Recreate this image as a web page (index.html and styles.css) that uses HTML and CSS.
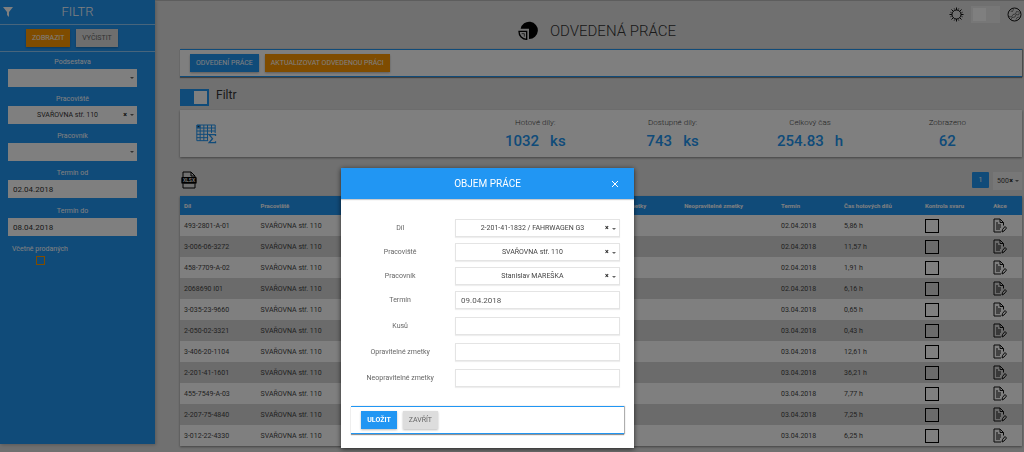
FILE: index.html
```html
<!DOCTYPE html>
<html lang="cs">
<head>
<meta charset="utf-8">
<title>Odvedená práce</title>
<link rel="stylesheet" href="styles.css">
</head>
<body>
<svg class="defs" aria-hidden="true">
  <symbol id="edit" viewBox="0 0 28 30">
    <g fill="none" stroke="#111" stroke-width="2">
      <path d="M21 15V9l-7-7H2v26h14M14 2v7h7"/>
      <path d="M6 10h4M6 14h10M6 18h10M6 22h8"/>
      <path d="M18 28l1-5 5-6 3 3-5 6z"/>
    </g>
  </symbol>
</svg>
<div class="page">
  <aside class="sidebar">
    <div class="side-head">
      <svg class="funnel" viewBox="0 0 10 10"><path d="M0 0h10L6 5v5L4 8V5z" fill="#fff"/></svg>
      <h2 class="side-title">FILTR</h2>
    </div>
    <div class="side-buttons">
      <button class="btn orange" type="button">ZOBRAZIT</button>
      <button class="btn grey" type="button">VYČISTIT</button>
    </div>
    <form class="side-form">
      <div class="side-field">
        <label for="f-sub">Podsestava</label>
        <div class="pick"><select id="f-sub"><option></option></select></div>
      </div>
      <div class="side-field">
        <label for="f-place">Pracoviště</label>
        <div class="pick"><select id="f-place"><option>SVAŘOVNA stř. 110</option></select><button class="clear" type="button">×</button></div>
      </div>
      <div class="side-field">
        <label for="f-worker">Pracovník</label>
        <div class="pick"><select id="f-worker"><option></option></select></div>
      </div>
      <div class="side-field date">
        <label for="f-from">Termín od</label>
        <input class="text" id="f-from" type="text" value="02.04.2018">
      </div>
      <div class="side-field date">
        <label for="f-to">Termín do</label>
        <input class="text" id="f-to" type="text" value="08.04.2018">
      </div>
      <div class="side-check">
        <label for="f-sold">Včetně prodaných</label>
        <input id="f-sold" type="checkbox">
      </div>
    </form>
  </aside>

  <main class="main">
    <div class="tools">
      <svg class="sun" viewBox="0 0 30 30" fill="none" stroke="#111" stroke-width="2"><circle cx="15" cy="15" r="9"/><path d="M15 6V1M15 24v5M6 15H1M24 15h5M9 9L5 5M21 9l4-4M9 21l-4 4M21 21l4 4"/><path stroke-width="1" d="M12 6l-2-4M18 6l2-4M12 24l-2 4M18 24l2 4M6 12l-4-2M24 12l4-2M6 18l-4 2M24 18l4 2"/></svg>
      <input class="switch" type="checkbox" aria-label="Režim">
      <svg class="moon" viewBox="0 0 30 30" fill="none" stroke="#111" stroke-width="2"><circle cx="15" cy="15" r="13"/><path stroke-width="1" d="M4 19l5 1 3-5 5-1 2-5 5 1M8 25l2-4 6-1 2-5 5 1 2-5M7 8l4 1 2-5M18 25l2-4 5-1"/></svg>
    </div>
    <header class="title-row">
      <svg class="pie" viewBox="0 0 60 60"><path d="M8 23A26 26 0 1 1 33 54V23z"/><path d="M3 31h23v24A23 23 0 0 1 3 31z" fill="none" stroke="#000" stroke-width="4"/><path d="M11 38h8v9" fill="none" stroke="#000" stroke-width="2"/></svg>
      <h1 class="title">ODVEDENÁ PRÁCE</h1>
    </header>
    <div class="bar">
      <button class="btn blue" type="button">ODVEDENÍ PRÁCE</button>
      <button class="btn orange" type="button">AKTUALIZOVAT ODVEDENOU PRÁCI</button>
    </div>
    <div class="filter-toggle">
      <input class="switch" id="filter-on" type="checkbox" checked>
      <label for="filter-on">Filtr</label>
    </div>
    <section class="summary">
      <svg class="sum-icon" viewBox="0 0 62 60" fill="none" stroke="#2196f3" stroke-width="3"><path d="M36 50H2V3h55v24M2 12h55M2 21h55M2 31h36M2 41h34M12 3v47M23 3v47M34 3v47M46 3v24"/><path d="M3 4h8v7H3z" fill="#333"/><path d="M58 36v-4H39l10 12-10 12h19v-4" stroke-width="4"/></svg>
      <dl class="stats">
        <div><dt>Hotové díly:</dt><dd><span>1032</span><span>ks</span></dd></div>
        <div><dt>Dostupné díly:</dt><dd><span>743</span><span>ks</span></dd></div>
        <div><dt>Celkový čas</dt><dd><span>254.83</span><span>h</span></dd></div>
        <div><dt>Zobrazeno</dt><dd><span>62</span></dd></div>
      </dl>
    </section>
    <div class="list-tools">
      <button class="xlsx" type="button" aria-label="Export">
        <svg viewBox="0 0 48 54"><path d="M6 18V3h24l12 12v3M6 38v13h36V38M30 3v12h12" fill="none" stroke="#000" stroke-width="3"/><rect x="1" y="18" width="46" height="20" rx="3"/><text x="24" y="33" text-anchor="middle" class="xlsx-text">XLSX</text></svg>
      </button>
      <div class="pager">
        <button class="page-no" type="button">1</button>
        <div class="pick size"><select aria-label="Počet"><option>500</option></select><button class="clear" type="button">×</button></div>
      </div>
    </div>
    <table class="grid">
      <colgroup><col class="c-part"><col class="c-place"><col class="c-fix"><col class="c-bad"><col class="c-date"><col class="c-time"><col class="c-weld"><col class="c-act"></colgroup>
      <thead><tr><th>Díl</th><th>Pracoviště</th><th>Opravitelné zmetky</th><th>Neopravitelné zmetky</th><th>Termín</th><th>Čas hotových dílů</th><th>Kontrola svaru</th><th>Akce</th></tr></thead>
      <tbody>
        <tr><td>493-2801-A-01</td><td>SVAŘOVNA stř. 110</td><td></td><td></td><td>02.04.2018</td><td>5,86 h</td><td><input type="checkbox" aria-label="Kontrola svaru"></td><td><button class="edit" type="button" aria-label="Upravit"><svg><use href="#edit"/></svg></button></td></tr>
        <tr><td>3-006-06-3272</td><td>SVAŘOVNA stř. 110</td><td></td><td></td><td>02.04.2018</td><td>11,57 h</td><td><input type="checkbox" aria-label="Kontrola svaru"></td><td><button class="edit" type="button" aria-label="Upravit"><svg><use href="#edit"/></svg></button></td></tr>
        <tr><td>458-7709-A-02</td><td>SVAŘOVNA stř. 110</td><td></td><td></td><td>02.04.2018</td><td>1,91 h</td><td><input type="checkbox" aria-label="Kontrola svaru"></td><td><button class="edit" type="button" aria-label="Upravit"><svg><use href="#edit"/></svg></button></td></tr>
        <tr><td>2068690 I01</td><td>SVAŘOVNA stř. 110</td><td></td><td></td><td>02.04.2018</td><td>6,16 h</td><td><input type="checkbox" aria-label="Kontrola svaru"></td><td><button class="edit" type="button" aria-label="Upravit"><svg><use href="#edit"/></svg></button></td></tr>
        <tr><td>3-035-23-9660</td><td>SVAŘOVNA stř. 110</td><td></td><td></td><td>03.04.2018</td><td>0,65 h</td><td><input type="checkbox" aria-label="Kontrola svaru"></td><td><button class="edit" type="button" aria-label="Upravit"><svg><use href="#edit"/></svg></button></td></tr>
        <tr><td>2-050-02-3321</td><td>SVAŘOVNA stř. 110</td><td></td><td></td><td>03.04.2018</td><td>0,43 h</td><td><input type="checkbox" aria-label="Kontrola svaru"></td><td><button class="edit" type="button" aria-label="Upravit"><svg><use href="#edit"/></svg></button></td></tr>
        <tr><td>3-406-20-1104</td><td>SVAŘOVNA stř. 110</td><td></td><td></td><td>03.04.2018</td><td>12,61 h</td><td><input type="checkbox" aria-label="Kontrola svaru"></td><td><button class="edit" type="button" aria-label="Upravit"><svg><use href="#edit"/></svg></button></td></tr>
        <tr><td>2-201-41-1601</td><td>SVAŘOVNA stř. 110</td><td></td><td></td><td>03.04.2018</td><td>36,21 h</td><td><input type="checkbox" aria-label="Kontrola svaru"></td><td><button class="edit" type="button" aria-label="Upravit"><svg><use href="#edit"/></svg></button></td></tr>
        <tr><td>455-7549-A-03</td><td>SVAŘOVNA stř. 110</td><td></td><td></td><td>03.04.2018</td><td>7,77 h</td><td><input type="checkbox" aria-label="Kontrola svaru"></td><td><button class="edit" type="button" aria-label="Upravit"><svg><use href="#edit"/></svg></button></td></tr>
        <tr><td>2-207-75-4840</td><td>SVAŘOVNA stř. 110</td><td></td><td></td><td>03.04.2018</td><td>7,25 h</td><td><input type="checkbox" aria-label="Kontrola svaru"></td><td><button class="edit" type="button" aria-label="Upravit"><svg><use href="#edit"/></svg></button></td></tr>
        <tr><td>3-012-22-4330</td><td>SVAŘOVNA stř. 110</td><td></td><td></td><td>03.04.2018</td><td>6,25 h</td><td><input type="checkbox" aria-label="Kontrola svaru"></td><td><button class="edit" type="button" aria-label="Upravit"><svg><use href="#edit"/></svg></button></td></tr>
      </tbody>
    </table>
  </main>
</div>

<div class="overlay">
  <div class="dialog" role="dialog" aria-labelledby="dlg-title">
    <div class="dialog-head">
      <h2 class="dialog-title" id="dlg-title">OBJEM PRÁCE</h2>
      <button class="close" type="button" aria-label="Zavřít"><svg viewBox="0 0 8 8"><path d="M1 1l6 6M7 1L1 7" stroke="#fff" fill="none"/></svg></button>
    </div>
    <form class="dialog-form">
      <div class="row"><label for="d-part">Díl</label><div class="pick"><select id="d-part"><option>2-201-41-1832 / FAHRWAGEN G3</option></select><button class="clear" type="button">×</button></div></div>
      <div class="row"><label for="d-place">Pracoviště</label><div class="pick"><select id="d-place"><option>SVAŘOVNA stř. 110</option></select><button class="clear" type="button">×</button></div></div>
      <div class="row"><label for="d-worker">Pracovník</label><div class="pick"><select id="d-worker"><option>Stanislav MAREŠKA</option></select><button class="clear" type="button">×</button></div></div>
      <div class="row wide"><label for="d-date">Termín</label><input class="text" id="d-date" type="text" value="09.04.2018"></div>
      <div class="row wide"><label for="d-count">Kusů</label><input class="text" id="d-count" type="text"></div>
      <div class="row wide"><label for="d-fix">Opravitelné zmetky</label><input class="text" id="d-fix" type="text"></div>
      <div class="row wide"><label for="d-bad">Neopravitelné zmetky</label><input class="text" id="d-bad" type="text"></div>
    </form>
    <div class="bar dialog-bar">
      <button class="btn blue strong" type="button">ULOŽIT</button>
      <button class="btn grey" type="button">ZAVŘÍT</button>
    </div>
  </div>
</div>
</body>
</html>
```

FILE: styles.css
```css
* { box-sizing: border-box; }
body {
  margin: 0;
  background: #e0e0e0;
  color: #444;
  font: 7px/12px Roboto, "Open Sans", sans-serif;
}
h1, h2, dl, dd { margin: 0; font-weight: 300; }
button, input, select { margin: 0; border: 0; border-radius: 0; font: inherit; color: inherit; }
input[type="checkbox"] { appearance: none; display: block; }
svg { display: block; }
.defs { position: absolute; width: 0; height: 0; }
.page { display: flex; align-items: flex-start; height: 100vh; overflow: hidden; }

/* filter panel */
.sidebar {
  flex: 0 0 155px;
  height: calc(100vh - 8px);
  background: #2196f3;
  color: #fff;
  box-shadow: 1px 1px 3px #8888;
}
.side-head {
  display: flex;
  align-items: center;
  height: 25px;
  padding: 0 3px;
  border-bottom: 1px solid #90caf9;
}
.funnel { width: 10px; height: 10px; }
.side-title { flex: 1; padding-right: 10px; font-size: 13px; line-height: 20px; text-align: center; }
.side-buttons {
  display: flex;
  gap: 6px;
  height: 27px;
  padding: 4px 26px;
  border-bottom: 1px solid #90caf9;
}
.side-form { padding: 4px 18px 0 8px; }
.side-field { display: flex; flex-direction: column; margin-bottom: 6px; text-align: center; }
.side-field.date { margin-bottom: 7px; }
.side-field label { line-height: 13px; }
.side-field .pick, .side-field .text { color: #333; }
.side-check { display: flex; flex-direction: column; align-items: center; gap: 1px; width: 64px; white-space: nowrap; }
.side-check input { width: 9px; height: 9px; border: 1px solid #ff9800; }

/* controls */
.btn { padding: 0 6px; height: 18px; line-height: 18px; white-space: nowrap; box-shadow: 0 1px 2px #0004; }
.orange { background: #ff9800; color: #fff; }
.blue { background: #2196f3; color: #fff; }
.grey { background: #ddd; color: #666; }
.strong { font-weight: 700; }
.pick { position: relative; height: 18px; background: #fff; }
.pick select {
  appearance: none;
  width: 100%;
  height: 100%;
  padding: 0 18px 0 8px;
  background: none;
  text-align: center;
  text-align-last: center;
}
.pick::after {
  content: "";
  position: absolute;
  right: 3px;
  top: 8px;
  border: 2px solid transparent;
  border-top-color: #666;
}
.clear {
  position: absolute;
  right: 10px;
  top: 3px;
  padding: 0;
  background: none;
  color: #111;
  font-weight: 700;
  line-height: 12px;
}
.text { width: 100%; height: 18px; padding: 0 5px; background: #fff; font-size: 8px; }
.switch { width: 29px; height: 17px; padding: 2px; background: #eee; }
.switch::before { content: ""; display: block; width: 13px; height: 13px; background: #fff; }
.switch:checked { background: #2196f3; }
.switch:checked::before { margin-left: auto; }

/* main column */
.main { flex: 1; min-width: 0; padding: 0 2px 0 25px; border-top: 1px solid #bbb; }
.tools { display: flex; justify-content: flex-end; align-items: center; gap: 7px; height: 20px; padding-top: 7px; }
.tools .switch { background: #eee; }
.sun, .moon { width: 15px; height: 15px; }
.title-row { display: flex; justify-content: center; align-items: center; gap: 12px; height: 20px; margin-bottom: 8px; padding-right: 8px; }
.pie { width: 20px; height: 20px; }
.title { font-size: 15px; line-height: 20px; color: #333; }
.bar {
  display: flex;
  gap: 6px;
  padding: 4px 10px;
  background: #fff;
  border: solid #2196f3;
  border-width: 1px 0;
  box-shadow: 0 1px 1px #0006, 1px 0 1px #0004;
}
.filter-toggle { display: flex; gap: 7px; height: 33px; padding-top: 12px; font-size: 12px; color: #333; }
.summary { display: flex; align-items: center; height: 47px; padding: 0 6px 0 16px; background: #fff; box-shadow: 0 1px 2px #0006; }
.sum-icon { width: 21px; height: 20px; }
.stats { display: grid; grid-template-columns: repeat(4, 1fr); width: 67%; margin-left: auto; text-align: center; }
.stats dt { font-size: 8px; line-height: 14px; }
.stats dd { display: flex; justify-content: center; gap: 11px; color: #2196f3; font-size: 15px; line-height: 22px; font-weight: 500; }
.list-tools { display: flex; justify-content: space-between; height: 39px; padding: 14px 0 0 1px; }
.xlsx { width: 16px; height: 18px; padding: 0; background: none; }
.xlsx-text { fill: #e0e0e0; font-size: 15px; font-weight: 700; }
.pager { display: flex; gap: 4px; padding-top: 1px; }
.page-no { width: 17px; height: 16px; padding: 0; background: #2196f3; color: #fff; border-radius: 1px; }
.size { width: 29px; background: #eee; }
.size select { padding: 0 12px 0 3px; }
.size .clear { right: 9px; }

.grid { width: 100%; table-layout: fixed; border-collapse: collapse; box-shadow: 0 1px 2px #0006; }
.c-part { width: 9.1%; }
.c-place { width: 39.6%; }
.c-fix { width: 10.7%; }
.c-bad { width: 11.5%; }
.c-date { width: 7.5%; }
.c-time { width: 9.6%; }
.c-weld { width: 8.1%; }
.c-act { width: 3.9%; }
.grid th { height: 19px; padding: 0 4px; background: #2196f3; color: #fff; font-size: 6px; text-align: left; white-space: nowrap; }
.grid td { height: 21px; padding: 0 4px; white-space: nowrap; }
.grid tbody tr { background: #fff; }
.grid tbody tr:nth-child(even) { background: #d6d6d6; }
.grid td input { width: 14px; height: 14px; border: 1px solid #000; }
.edit { display: block; padding: 0; background: none; }
.edit svg { width: 14px; height: 15px; }

/* dialog */
.overlay {
  position: fixed;
  inset: 0;
  display: flex;
  justify-content: center;
  align-items: flex-start;
  padding: 168px 49px 0 0;
  background: rgba(0, 0, 0, .5);
}
.dialog { width: 30%; min-width: 280px; background: #fff; box-shadow: 0 1px 5px #000a; }
.dialog-head { display: flex; align-items: center; height: 31px; padding: 0 15px; background: #2196f3; color: #fff; box-shadow: 0 1px 1px #0003; }
.dialog-title { flex: 1; padding-left: 8px; font-size: 10px; font-weight: 400; text-align: center; }
.close { padding: 0; background: none; }
.close svg { width: 8px; height: 8px; }
.dialog-form { padding: 20px 14px 11px 4px; }
.row { display: grid; grid-template-columns: 2fr 3fr; align-items: center; margin-bottom: 6px; }
.row.wide { margin-bottom: 8px; }
.row label { text-align: center; color: #666; }
.row .pick, .row .text { border: 1px solid #e4e4e4; box-shadow: 0 1px 1px #0001; }
.row .text { color: #555; }
.row .clear { top: 2px; }
.dialog-bar { margin: 0 10px 14px; }
```
